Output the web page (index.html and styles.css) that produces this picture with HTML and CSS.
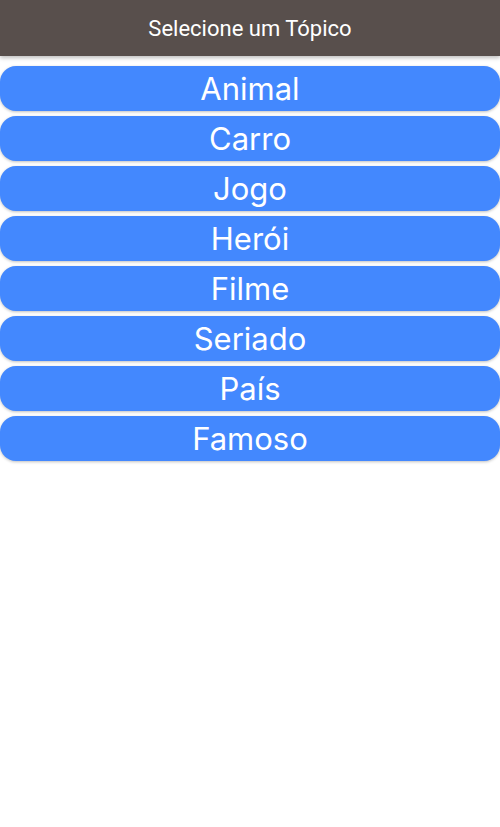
FILE: index.html
```html
<!DOCTYPE html>
<html lang="pt">
<head>
<meta charset="utf-8">
<link rel="stylesheet" href="styles.css">
</head>
<body>
<header class="appbar"><h1 class="title">Selecione um Tópico</h1></header>
<main class="list">
  <button class="topic">Animal</button>
  <button class="topic">Carro</button>
  <button class="topic">Jogo</button>
  <button class="topic">Herói</button>
  <button class="topic">Filme</button>
  <button class="topic">Seriado</button>
  <button class="topic">País</button>
  <button class="topic">Famoso</button>
</main>
</body>
</html>
```
FILE: styles.css
```css
html, body { margin: 0; padding: 0; background: #fff; }
body { width: 500px; height: 827px; overflow: hidden; }
.appbar {
  height: 56px;
  background: #584f4c;
  display: flex;
  align-items: center;
  justify-content: center;
  box-shadow: 0 2px 4px rgba(0,0,0,0.25);
  position: relative;
  z-index: 1;
}
.title {
  margin: 0;
  font-family: Roboto, "Liberation Sans", sans-serif;
  font-weight: 400;
  font-size: 22px;
  color: #fff;
}
.list {
  display: flex;
  flex-direction: column;
  gap: 5px;
  padding-top: 10px;
}
.topic {
  height: 45px;
  border: 0;
  margin: 0;
  border-radius: 16px;
  background: #4388fe;
  color: #fff;
  font-family: Inter, "Open Sans", sans-serif;
  font-size: 31px;
  font-weight: 400;
  line-height: 45px;
  box-shadow: 0 1px 3px rgba(0,0,0,0.25);
  padding: 0;
}
```
